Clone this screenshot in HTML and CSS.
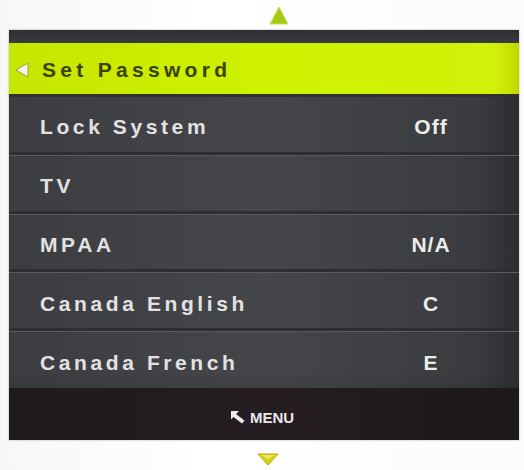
FILE: index.html
```html
<!DOCTYPE html>
<html>
<head>
<meta charset="utf-8">
<link rel="stylesheet" href="styles.css">
</head>
<body>
<div class="screen">
  <div class="arrow-up-wrap">
    <svg class="arrow-up" width="20" height="19" viewBox="0 0 20 19"><polygon points="10,1 19,18 1,18" fill="#a4c814" stroke="#c8e24a" stroke-width="1"/></svg>
  </div>
  <div class="panel">
    <div class="top-strip"></div>
    <div class="selected">
      <svg class="left-tri" width="14" height="16" viewBox="0 0 14 16"><polygon points="1,8 13,1 13,15" fill="#f4f4e8" stroke="#9aa050" stroke-width="1"/></svg>
      <span class="sel-label">Set Password</span>
    </div>
    <div class="rows">
      <div class="row"><span class="label">Lock System</span><span class="value">Off</span></div>
      <div class="row"><span class="label">TV</span><span class="value"></span></div>
      <div class="row"><span class="label">MPAA</span><span class="value">N/A</span></div>
      <div class="row"><span class="label">Canada English</span><span class="value">C</span></div>
      <div class="row last"><span class="label">Canada French</span><span class="value">E</span></div>
    </div>
    <div class="footer">
      <svg class="menu-icon" width="16" height="14" viewBox="0 0 16 14"><polygon points="1,1 9,1 6,4 14.5,10.5 12,13.5 3.5,7 1,9.5" fill="#ececec"/></svg>
      <span class="menu-text">MENU</span>
    </div>
  </div>
  <div class="arrow-down-wrap">
    <svg class="arrow-down" width="22" height="13" viewBox="0 0 22 13"><polygon points="1,1 21,1 11,12" fill="#d8cf10" stroke="#b8ae00" stroke-width="1"/><polygon points="4,2 18,2 11,6" fill="#ede870"/></svg>
  </div>
</div>
</body>
</html>
```

FILE: styles.css
```css
html, body {
  margin: 0;
  padding: 0;
  background: #ffffff;
}
.screen {
  width: 524px;
  height: 470px;
  display: flex;
  flex-direction: column;
  font-family: "Liberation Sans", Arial, sans-serif;
  background: linear-gradient(90deg, #f7f7f7 0%, #ffffff 40%, #fbfbfb 100%);
}
.arrow-up-wrap {
  height: 30px;
  display: flex;
  justify-content: flex-start;
  padding-left: 269px;
  box-sizing: border-box;
  padding-top: 6px;
}
.panel {
  margin-left: 9px;
  width: 510px;
  height: 410px;
  display: flex;
  flex-direction: column;
  background: linear-gradient(90deg, #3c3d40 0%, #44464a 50%, #3a3b3e 92%, #2c2d30 100%);
  box-shadow: 0 0 2px rgba(0,0,0,0.3);
}
.top-strip {
  height: 13px;
  background: linear-gradient(180deg, #2e2f33, #3a3b3e);
}
.selected {
  height: 51px;
  display: flex;
  align-items: center;
  background: linear-gradient(90deg, #c6e600 0%, #cff200 50%, #d2f20a 95%, #c0d800 100%);
  border-bottom: 3px solid #2f3032;
}
.left-tri {
  margin-left: 6px;
  margin-right: 13px;
  margin-top: 2px;
}
.sel-label {
  font-size: 21px;
  font-weight: bold;
  letter-spacing: 4.3px;
  color: #3a4200;
  margin-top: 2px;
}
.rows {
  flex: 1;
  display: flex;
  flex-direction: column;
}
.row {
  flex: 1;
  display: flex;
  align-items: center;
  padding-left: 31px;
  padding-top: 5px;
  box-sizing: border-box;
  border-bottom: 2px solid #2d2e31;
  box-shadow: inset 0 -1px 0 #2d2e31;
}
.row + .row {
  border-top: 1px solid #5a5b5e;
}
.row.last {
  border-bottom: none;
  box-shadow: none;
  background: linear-gradient(180deg, rgba(0,0,0,0) 70%, rgba(0,0,0,0.08) 100%);
}
.label {
  width: 366px;
  font-size: 21px;
  font-weight: bold;
  letter-spacing: 3.6px;
  color: #e2e2e2;
}
.value {
  width: 50px;
  text-align: center;
  font-size: 21px;
  font-weight: bold;
  letter-spacing: 1px;
  color: #ececec;
}
.footer {
  height: 52px;
  display: flex;
  align-items: center;
  justify-content: center;
  background: linear-gradient(90deg, #1e1a1d 0%, #251d21 50%, #1c181b 100%);
  padding-top: 6px;
  box-sizing: border-box;
  padding-right: 4px;
}
.menu-icon {
  margin-right: 4px;
}
.menu-text {
  font-size: 15px;
  font-weight: bold;
  color: #e8e8e8;
}
.arrow-down-wrap {
  flex: 1;
  padding-left: 257px;
  padding-top: 12px;
  box-sizing: border-box;
}
```
